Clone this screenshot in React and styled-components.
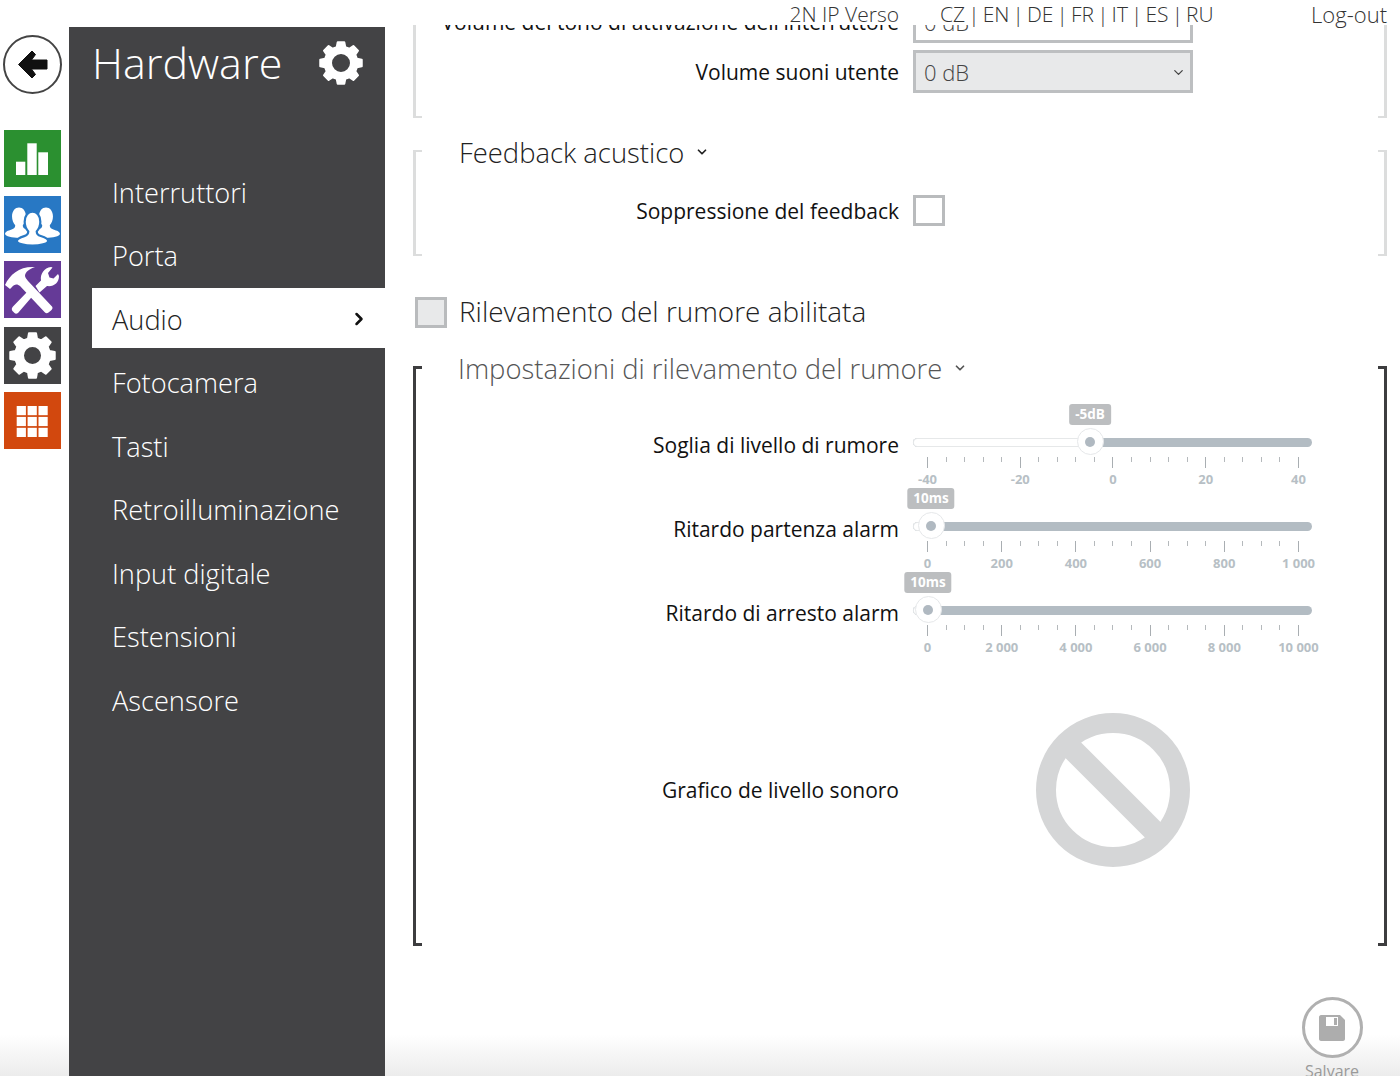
import React from "react";
import styled, { createGlobalStyle } from "styled-components";
import { ChevronDown, ChevronRight } from "lucide-react";

const Global = createGlobalStyle`
  html, body { margin: 0; padding: 0; height: 1076px; overflow: hidden; background: #fff; }
  #root { height: 1076px; }
  * { box-sizing: border-box; }
  body { font-family: "Open Sans", "Noto Sans", sans-serif; color: #111; }
`;

const Page = styled.div`
  position: relative;
  height: 1076px;
  width: 1400px;
  display: grid;
  grid-template-columns: 69px 316px 1fr;
  overflow: hidden;
`;

const Rail = styled.nav`
  display: flex;
  flex-direction: column;
  padding: 35px 0 0 4px;
  gap: 8.5px;
`;
const BackButton = styled.div`
  width: 59px;
  height: 59px;
  border: 2px solid #444;
  border-radius: 50%;
  margin-bottom: 27.5px;
  margin-left: -1px;
  display: flex;
  align-items: center;
  justify-content: center;
  background: #fff;
`;
const Tile = styled.div`
  width: 57px;
  height: 57px;
  background: ${(p) => p.$bg};
  display: flex;
`;

const Sidebar = styled.aside`
  position: relative;
  z-index: 2;
  margin-top: 27px;
  background: #434345;
  color: #fff;
  display: flex;
  flex-direction: column;
`;
const SideHead = styled.div`
  display: flex;
  align-items: center;
  justify-content: space-between;
  height: 72px;
  padding: 0 21px 0 23px;
`;
const SideTitle = styled.h1`
  margin: 0;
  font-size: 43px;
  font-weight: 300;
  line-height: 74px;
`;
const Menu = styled.ul`
  list-style: none;
  display: flex;
  flex-direction: column;
  gap: 3.45px;
  margin: 62px 0 0 23px;
  padding: 0;
`;
const MenuItem = styled.li`
  height: 60px;
  padding: 3px 16px 0 20px;
  display: flex;
  align-items: center;
  justify-content: space-between;
  font-size: 27.2px;
  font-weight: 300;
  background: ${(p) => (p.$active ? "#fff" : "transparent")};
  color: ${(p) => (p.$active ? "#222" : "#fff")};
`;

const Main = styled.main`
  position: relative;
  padding: 0 13px 0 28px;
  height: 1076px;
  overflow: hidden;
`;
const TopBar = styled.header`
  position: absolute;
  z-index: 1;
  top: 0;
  left: 0;
  right: 0;
  height: 25px;
  padding: 0 13px 0 0;
  background: #fff;
  display: grid;
  grid-template-columns: 514px auto 1fr;
  font-size: 21px;
  font-weight: 300;
  line-height: 29px;
  color: #333;
`;
const DeviceName = styled.div`
  text-align: right;
  white-space: nowrap;
`;
const Languages = styled.div`
  margin-left: 41px;
  white-space: nowrap;
  word-spacing: -2.35px;
`;
const Logout = styled.div`
  text-align: right;
  font-size: 22px;
`;

const Content = styled.div`
  margin-top: -10px;
`;
const Frame = styled.section`
  display: flex;
  height: ${(p) => p.$height}px;
  margin-top: ${(p) => p.$top || 0}px;
`;
const Edge = styled.div`
  flex: 0 0 9px;
  border: solid ${(p) => (p.$dark ? "#3d3d3f" : "#dcdddd")};
  border-width: ${(p) => (p.$dark ? "3px" : "2px")};
  border-left-width: ${(p) => (p.$right ? 0 : 3)}px;
  border-right-width: ${(p) => (p.$right ? 3 : 0)}px;
`;
const FrameBody = styled.div`
  flex: 1;
  min-width: 0;
`;
const SectionTitle = styled.h2`
  display: flex;
  align-items: center;
  gap: 11px;
  margin: -15px 0 1px;
  padding-left: ${(p) => (p.$muted ? 36 : 37)}px;
  height: 34px;
  font-size: 27.4px;
  font-weight: 300;
  color: ${(p) => (p.$muted ? "#555" : "#222")};
  white-space: nowrap;
`;
const Row = styled.div`
  display: grid;
  grid-template-columns: 477px 399px;
  column-gap: 14px;
  align-items: ${(p) => (p.$top ? "start" : "center")};
  height: ${(p) => (p.$height ? `${p.$height}px` : "auto")};
  margin-top: ${(p) => p.$mt || 0}px;
`;
const Label = styled.label`
  text-align: right;
  font-size: 21px;
  line-height: 28px;
  color: #111;
  white-space: nowrap;
  padding-top: ${(p) => p.$pad || 0}px;
`;
const Select = styled.div`
  width: 280px;
  height: 43px;
  border: 3px solid #bdbfc1;
  background: ${(p) => (p.$filled ? "#e8e9ea" : "#fff")};
  display: flex;
  align-items: center;
  justify-content: space-between;
  padding: 1px 4px 0 8px;
  font-size: 22px;
  font-weight: 300;
  color: #444;
`;
const Check = styled.div`
  flex: none;
  width: 32px;
  height: 31px;
  border: 3px solid #b9bbbd;
  background: ${(p) => (p.$filled ? "#e8e9ea" : "#fff")};
`;
const Toggle = styled.div`
  display: flex;
  align-items: center;
  gap: 12px;
  height: 31px;
  margin: 41px 0 0 2px;
`;
const ToggleText = styled.span`
  margin-top: -4px;
  font-size: 27.9px;
  font-weight: 300;
  color: #222;
  white-space: nowrap;
`;

const SliderBox = styled.div`
  position: relative;
  height: 84px;
  padding-top: 39px;
`;
const Track = styled.div`
  position: relative;
  height: 9px;
  border-radius: 5px;
  background: #b3bcc3;
`;
const TrackLow = styled.div`
  height: 9px;
  border-radius: 5px 0 0 5px;
  background: #fff;
  border: 1.5px solid #e6e8e9;
  border-right: 0;
`;
const Handle = styled.div`
  position: absolute;
  top: -10px;
  width: 27px;
  height: 27px;
  margin-left: -13.5px;
  border-radius: 50%;
  background: #fff;
  border: 1.5px solid #e6e8ea;
  display: flex;
  align-items: center;
  justify-content: center;
  &::after {
    content: "";
    width: 10px;
    height: 10px;
    border-radius: 50%;
    background: #b0b9c1;
  }
`;
const Bubble = styled.div`
  position: absolute;
  top: -34px;
  transform: translateX(-50%);
  height: 21px;
  padding: 0 6px;
  border-radius: 3px;
  background: #bcbec0;
  color: #fff;
  font-size: 13.5px;
  font-weight: 700;
  line-height: 21px;
  white-space: nowrap;
`;
const Ticks = styled.div`
  display: flex;
  justify-content: space-between;
  align-items: flex-start;
  height: 11px;
  margin: 10px 13px 0 14px;
`;
const Tick = styled.span`
  width: 1px;
  height: ${(p) => (p.$major ? 11 : 5)}px;
  background: ${(p) => (p.$major ? "#a9aeb2" : "#b5b9bc")};
`;
const ScaleLabels = styled.div`
  display: flex;
  justify-content: space-between;
  margin: 4px 13px 0 14px;
  height: 14px;
`;
const ScaleLabel = styled.span`
  flex: 0 0 1px;
  min-width: 0;
  display: flex;
  justify-content: center;
  white-space: nowrap;
  font-size: 13px;
  font-weight: 700;
  line-height: 14px;
  color: #b7bfc5;
`;
const Graph = styled.div`
  display: flex;
  justify-content: center;
`;

const Footer = styled.footer`
  position: absolute;
  z-index: 1;
  left: 0;
  right: 0;
  bottom: 0;
  height: 80px;
  background: linear-gradient(to bottom, rgba(236,236,236,0) 48%, #ececec 100%);
`;
const SaveAction = styled.div`
  position: absolute;
  top: 1px;
  left: 1297px;
  width: 70px;
  display: flex;
  flex-direction: column;
  align-items: center;
  color: #9a9a9a;
  font-size: 16px;
  line-height: 20px;
`;
const SaveRound = styled.div`
  width: 61px;
  height: 61px;
  margin-bottom: 3px;
  border: 3px solid #b0b0b0;
  border-radius: 50%;
  background: #fff;
  display: flex;
  align-items: center;
  justify-content: center;
`;

function gearPath(cx, cy, rOut, rIn, hole, teeth = 8) {
  const pts = [];
  const step = (Math.PI * 2) / teeth;
  for (let i = 0; i < teeth; i++) {
    const a = i * step - Math.PI / 2;
    const w = step * 0.2;
    const w2 = step * 0.33;
    [[a - w2, rIn], [a - w, rOut], [a + w, rOut], [a + w2, rIn]].forEach(([t, r]) => {
      pts.push(`${(cx + r * Math.cos(t)).toFixed(2)} ${(cy + r * Math.sin(t)).toFixed(2)}`);
    });
  }
  return `M${pts.join("L")}Z M${cx - hole} ${cy}a${hole} ${hole} 0 1 0 ${hole * 2} 0a${hole} ${hole} 0 1 0 ${-hole * 2} 0Z`;
}

const Gear = ({ size, rOut, rIn, hole }) => (
  <svg width={size} height={size} viewBox={`0 0 ${size} ${size}`}>
    <path
      d={gearPath(size / 2, size / 2, rOut, rIn, hole)}
      fill="#fff"
      fillRule="evenodd"
      stroke="#fff"
      strokeWidth="2"
      strokeLinejoin="round"
    />
  </svg>
);

const BackArrow = () => (
  <svg width="34" height="34" viewBox="0 0 34 34">
    <path
      d="M2.5 16.5 L16 3 L19.5 6.5 L15.5 12 H31 V21 H15.5 L19.5 26.5 L16 30 Z"
      fill="#111"
      stroke="#111"
      strokeWidth="1"
      strokeLinejoin="round"
    />
  </svg>
);

const BarsIcon = () => (
  <svg width="57" height="57" viewBox="0 0 57 57" fill="#fff">
    <rect x="12" y="31.7" width="9.3" height="13.3" />
    <rect x="23.3" y="13.3" width="9.4" height="31.7" />
    <rect x="34.3" y="22.3" width="9.7" height="22.7" />
  </svg>
);

const Person = ({ x, y, s, outline }) => (
  <g transform={`translate(${x} ${y}) scale(${s})`} fill="#fff" stroke={outline} strokeWidth={outline ? 2.4 : 0}>
    <path d="M-8.5 -9 C-8.5 -16 -4.5 -20 0 -20 C4.5 -20 8.5 -16 8.5 -9 C8.5 -4.5 6.8 -1 4.6 1.5 C4.6 4.5 6 5.6 9 6.6 C13.5 8 17 9.4 17 12 C17 15 8 17 0 17 C-8 17 -17 15 -17 12 C-17 9.4 -13.5 8 -9 6.6 C-6 5.6 -4.6 4.5 -4.6 1.5 C-6.8 -1 -8.5 -4.5 -8.5 -9 Z" />
  </g>
);

const UsersIcon = () => (
  <svg width="57" height="57" viewBox="0 0 57 57">
    <Person x={15} y={28} s={0.82} />
    <Person x={42} y={28} s={0.82} />
    <Person x={28.5} y={34} s={0.92} outline="#2878c4" />
  </svg>
);

const ToolsIcon = () => (
  <svg width="57" height="57" viewBox="0 0 57 57" fill="#fff">
    <path d="M1 24 C6 13 16 5 31 6 C25 8 21.5 11 21 14.5 C21 16 22 17.5 24 20 L48 45.5 C49 47 48.5 48 47 49.5 L44.5 51.5 C43 52.5 42 52.5 40.5 51 L16 25 C13.5 22.5 10 23 8 26 L6 28 Z" />
    <path d="M9 45.5 L25 29 L29.5 34 L14 52 C12.5 53 11.5 53 10.5 52 L8.5 50 C7.5 48.5 7.5 47 9 45.5 Z" />
    <path d="M31.5 25 L37 19.5 C36 13 40 7 47 6 L48.5 6.5 L44 12 L45.5 16.5 L49.5 17.5 L54 13 L55 15 C55 22 49.5 26 43 25 L35.5 31.5 Z" />
  </svg>
);

const GridIcon = () => (
  <svg width="57" height="57" viewBox="0 0 57 57" fill="#fff">
    {[0, 1, 2].flatMap((r) =>
      [0, 1, 2].map((c) => (
        <rect key={`${r}-${c}`} x={12.7 + c * 10.9} y={14 + r * 10.9} width="9.2" height="9.2" />
      ))
    )}
  </svg>
);

const NoGraph = () => (
  <svg width="154" height="154" viewBox="-77 -77 154 154" fill="none" stroke="#d5d6d7">
    <circle r="67" strokeWidth="20" />
    <line x1="-50" y1="-50" x2="50" y2="50" strokeWidth="22" />
  </svg>
);

const FloppyIcon = () => (
  <svg width="26" height="26" viewBox="0 0 26 26">
    <path
      fillRule="evenodd"
      fill="#adadad"
      d="M2 0 H21 L26 5 V24 C26 25 25 26 24 26 H2 C1 26 0 25 0 24 V2 C0 1 1 0 2 0 Z M7 2 V11 H19 V2 Z"
    />
    <rect x="15" y="3" width="3" height="7" fill="#adadad" />
  </svg>
);

const Slider = ({ low, bubble, every, labels }) => (
  <SliderBox>
    <Track>
      <TrackLow style={{ width: low + 5 }} />
      <Bubble style={{ left: low }}>{bubble}</Bubble>
      <Handle style={{ left: low }} />
    </Track>
    <Ticks>
      {Array.from({ length: 21 }, (_, i) => (
        <Tick key={i} $major={i % every === 0} />
      ))}
    </Ticks>
    <ScaleLabels>
      {labels.map((l) => (
        <ScaleLabel key={l}>{l}</ScaleLabel>
      ))}
    </ScaleLabels>
  </SliderBox>
);

const menu = ["Interruttori", "Porta", "Audio", "Fotocamera", "Tasti", "Retroilluminazione", "Input digitale", "Estensioni", "Ascensore"];

export default function App() {
  return (
    <Page>
      <Global />
      <Rail>
        <BackButton><BackArrow /></BackButton>
        <Tile $bg="#2b9030"><BarsIcon /></Tile>
        <Tile $bg="#2878c4"><UsersIcon /></Tile>
        <Tile $bg="#653a97"><ToolsIcon /></Tile>
        <Tile $bg="#434345"><Gear size={57} rOut={22.5} rIn={17.5} hole={9.5} /></Tile>
        <Tile $bg="#d2480e"><GridIcon /></Tile>
      </Rail>

      <Sidebar>
        <SideHead>
          <SideTitle>Hardware</SideTitle>
          <Gear size={46} rOut={21} rIn={16.5} hole={10} />
        </SideHead>
        <Menu>
          {menu.map((m) => (
            <MenuItem key={m} $active={m === "Audio"}>
              {m}
              {m === "Audio" && <ChevronRight size={20} strokeWidth={3} color="#111" />}
            </MenuItem>
          ))}
        </Menu>
      </Sidebar>

      <Main>
        <TopBar>
          <DeviceName>2N IP Verso</DeviceName>
          <Languages>CZ | EN | DE | FR | IT | ES | RU</Languages>
          <Logout>Log-out</Logout>
        </TopBar>
        <Content>
          <Frame $height={128}>
            <Edge />
            <FrameBody>
              <Row $mt={10}>
                <Label>Volume del tono di attivazione dell'interruttore</Label>
                <Select>0 dB<ChevronDown size={15} strokeWidth={2} /></Select>
              </Row>
              <Row $mt={7}>
                <Label>Volume suoni utente</Label>
                <Select $filled>0 dB<ChevronDown size={15} strokeWidth={2} /></Select>
              </Row>
            </FrameBody>
            <Edge $right />
          </Frame>

          <Frame $height={106} $top={32}>
            <Edge />
            <FrameBody>
              <SectionTitle>Feedback acustico<ChevronDown size={14} strokeWidth={3} /></SectionTitle>
              <Row $mt={26}>
                <Label>Soppressione del feedback</Label>
                <Check />
              </Row>
            </FrameBody>
            <Edge $right />
          </Frame>

          <Toggle><Check $filled /><ToggleText>Rilevamento del rumore abilitata</ToggleText></Toggle>

          <Frame $height={580} $top={38}>
            <Edge $dark />
            <FrameBody>
              <SectionTitle $muted>Impostazioni di rilevamento del rumore<ChevronDown size={14} strokeWidth={3} /></SectionTitle>
              <Row $top $height={84} $mt={14}>
                <Label $pad={32}>Soglia di livello di rumore</Label>
                <Slider low={177} bubble="-5dB" every={5} labels={["-40", "-20", "0", "20", "40"]} />
              </Row>
              <Row $top $height={84}>
                <Label $pad={32}>Ritardo partenza alarm</Label>
                <Slider low={18} bubble="10ms" every={4} labels={["0", "200", "400", "600", "800", "1 000"]} />
              </Row>
              <Row $top $height={84}>
                <Label $pad={32}>Ritardo di arresto alarm</Label>
                <Slider low={15} bubble="10ms" every={4} labels={["0", "2 000", "4 000", "6 000", "8 000", "10 000"]} />
              </Row>
              <Row $mt={62}>
                <Label>Grafico de livello sonoro</Label>
                <Graph><NoGraph /></Graph>
              </Row>
            </FrameBody>
            <Edge $dark $right />
          </Frame>
        </Content>
      </Main>

      <Footer>
        <SaveAction>
          <SaveRound><FloppyIcon /></SaveRound>
          Salvare
        </SaveAction>
      </Footer>
    </Page>
  );
}
